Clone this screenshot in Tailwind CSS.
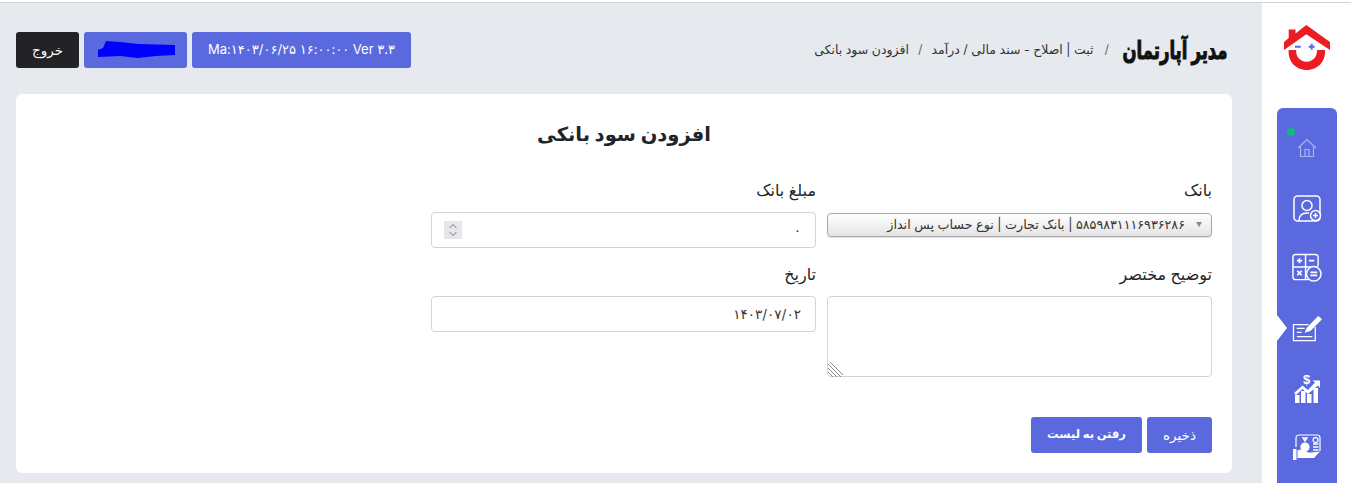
<!DOCTYPE html>
<html lang="fa">
<head>
  <meta charset="UTF-8">
  <meta name="viewport" content="width=device-width, initial-scale=1.0">
  <title>افزودن سود بانکی</title>
  <script src="https://cdn.jsdelivr.net/npm/@tailwindcss/browser@4"></script>
</head>
<body class="h-[483px] overflow-hidden bg-white font-['Inter','DejaVu_Sans',sans-serif] text-[#212529]">
  <div class="mt-[2px] flex h-[481px] border-t border-[#d4d4d4]">

    <!-- main -->
    <main class="w-[1262px] bg-[#e6e9ed] pt-[29px] pr-[30px] pl-4">
      <header class="flex h-9 items-center justify-between" dir="ltr">
        <div class="flex gap-[5px] text-[13.5px]">
          <button class="h-9 w-[63px] rounded-[3px] bg-[#232327] text-white" dir="rtl">خروج</button>
          <div class="flex h-9 w-[103px] items-center justify-center rounded-[3px] bg-[#5a69de]">
            <svg class="ml-[2px]" width="78" height="18" viewBox="0 0 78 18"><path d="M5 7 L8 0 L22 1 L40 3 L77 4 L77 14 L58 15 L40 17 L22 15 L0 16 L0 9 Z" fill="#0000ff"/></svg>
          </div>
          <div class="flex h-9 w-[219px] items-center justify-center rounded-[3px] bg-[#5a69de] text-[13px] text-white" dir="ltr">Ma:۱۴۰۳/۰۶/۲۵ ۱۶:۰۰:۰۰ Ver ۳.۳</div>
        </div>
        <div class="flex items-center" dir="rtl">
          <div class="mr-[4px] ml-[13px] w-[106px] scale-y-[1.5] text-center text-[16.5px] leading-none font-bold whitespace-nowrap text-[#111] [-webkit-text-stroke:0.7px_#111]">مدیر آپارتمان</div>
          <nav class="flex items-center gap-[9px] text-[12.5px] text-[#333]">
            <span class="ml-[2px] text-[#666]">/</span>
            <span>ثبت | اصلاح - سند مالی / درآمد</span>
            <span class="text-[#666]">/</span>
            <span>افزودن سود بانکی</span>
          </nav>
        </div>
      </header>

      <section class="mt-[26px] h-[379px] rounded-md bg-white px-5 pt-[26px]" dir="rtl">
        <h1 class="text-center text-[19.5px] leading-[28px] font-bold text-[#212529]">افزودن سود بانکی</h1>

        <form class="mt-[30px]">
          <div class="grid grid-cols-[385px_385px] gap-x-[11px]">
            <div>
              <label class="block h-[34px] text-[16px] leading-[24px]">بانک</label>
              <div class="relative h-9 pt-px">
                <select class="block h-6 w-full appearance-none rounded-[4px] border border-[#a8a8a8] bg-gradient-to-b from-white to-[#e4e4e4] pr-[26px] pl-2 text-[12.7px] text-[#333] shadow-[0_1px_1px_rgba(0,0,0,0.12)]">
                  <option>۵۸۵۹۸۳۱۱۱۶۹۳۶۲۸۶ | بانک تجارت | نوع حساب پس انداز</option>
                </select>
                <span class="absolute top-[10px] right-[10px] h-0 w-0 border-x-[3.5px] border-t-[5px] border-x-transparent border-t-[#888]"></span>
              </div>
            </div>
            <div>
              <label class="block h-[34px] text-[16px] leading-[24px]">مبلغ بانک</label>
              <div class="relative">
                <input type="text" value="۰" class="h-9 w-full rounded-[4px] border border-[#cfd4da] bg-white px-[14px] text-[13.5px] text-[#333]">
                <span class="absolute top-[9px] left-[13px] flex h-[18px] w-[18px] flex-col items-center justify-center bg-[#e6e6eb]">
                  <svg width="10" height="14" viewBox="0 0 10 14" fill="none" stroke="#777" stroke-width="1"><path d="M1.5 5 5 1.5 8.5 5M1.5 9 5 12.5 8.5 9"/></svg>
                </span>
              </div>
            </div>
          </div>

          <div class="mt-[14px] grid grid-cols-[385px_385px] gap-x-[11px]">
            <div>
              <label class="block h-[34px] text-[16px] leading-[24px]">توضیح مختصر</label>
              <div class="relative">
                <textarea class="block h-[81px] w-full resize-none rounded-[4px] border border-[#cfd4da] bg-white"></textarea>
                <svg class="absolute bottom-0 left-0" width="16" height="16" viewBox="0 0 16 16" fill="none" stroke="#8a8a8a" stroke-width="1"><path d="M1 3 14 16M1 7 10 16M1 11 6 16M3 1 16 14"/></svg>
              </div>
            </div>
            <div>
              <label class="block h-[34px] text-[16px] leading-[24px]">تاریخ</label>
              <input type="text" value="۱۴۰۳/۰۷/۰۲" class="h-9 w-full rounded-[4px] border border-[#cfd4da] bg-white px-[14px] text-[13.5px] text-[#333]">
            </div>
          </div>

          <div class="mt-10 flex gap-[5px]">
            <button type="button" class="h-9 w-[65px] rounded-[3px] bg-[#5a69de] text-[13.5px] text-white">ذخیره</button>
            <button type="button" class="h-9 w-[111px] rounded-[3px] bg-[#5a69de] text-[11.5px] font-bold text-white">رفتن به لیست</button>
          </div>
        </form>
      </section>
    </main>

    <!-- sidebar -->
    <aside class="w-[89px] bg-white">
      <div class="flex h-[105px] items-start justify-center pt-[21px]">
        <svg class="ml-[1px]" width="46" height="48" viewBox="0 0 46 48">
          <path d="M0 18V26L22.300 10.300 46 26V18L22.300 1 11.500 9.500V5.500H4.700V14Z" fill="#ed1c24"/>
          <path d="M4.700 26H12.300C11.500 31 15 37.700 22.500 37.700 30 37.700 33.500 31 33 26H41C42 37 34 46 22.800 46 11.500 46 3.700 37 4.700 26Z" fill="#ed1c24"/>
          <path d="M11 22.700H16.700M24.700 22.700H30.700M27.700 19.700V25.700" stroke="#5a69de" stroke-width="2" fill="none"/>
        </svg>
      </div>
      <div class="relative ml-[15px] flex h-[375px] w-[60px] flex-col items-center gap-[31px] rounded-t-md bg-[#5a69de] pt-[30px] text-white">
        <span class="absolute top-[20px] left-[10px] h-2 w-2 rounded-full bg-[#10b981]"></span>
        <span class="absolute top-[207px] left-0 h-0 w-0 border-y-[13px] border-l-[10px] border-y-transparent border-l-white"></span>

        <svg class="mb-[6px]" width="20" height="20" viewBox="0 0 20 20" fill="none" stroke="#aab3f0" stroke-width="1.200"><path d="M1 10 10 1.500 19 10M3.500 8.500V18.500H16.500V8.500M8 18.500V11.500H12V18.500"/></svg>
        <svg width="29" height="27" viewBox="0 0 29 27" fill="none" stroke="#fff" stroke-width="1.500"><rect x="1" y="1" width="26" height="25" rx="3.500"/><circle cx="14" cy="10.500" r="5"/><path d="M6 26c0-5 3-8 8-8h2"/><circle cx="22.500" cy="20.500" r="5" fill="#5a69de"/><path d="M20 20.500h5M22.500 18v5"/></svg>
        <svg width="30" height="30" viewBox="0 0 31 30" fill="none" stroke="#fff" stroke-width="1.500"><path d="M17 27H3.500A2.500 2.500 0 0 1 1 24.500V3.500A2.500 2.500 0 0 1 3.500 1h21A2.500 2.500 0 0 1 27 3.500V13M14 1v26M1 14h26"/><path d="M5 7.500h5.500M7.750 5v5M17.500 7.500h5.500M5.500 18l4.500 4.500M10 18l-4.500 4.500" stroke-width="1.800"/><circle cx="22.500" cy="21" r="7.500" fill="#5a69de"/><path d="M19 19.500h7M19 22.500h7" stroke-width="1.800"/></svg>
        <svg width="31" height="28" viewBox="0 0 32 28" fill="none" stroke="#fff" stroke-width="1.300"><path d="M24 13V27H1.500V10.500H17"/><path d="M5 14.500h8M5 18.500h5M5 23h16"/><path d="M13 19l2-5L27 1.500l4 3.500L19 17z" fill="#fff" stroke="none"/></svg>
        <svg class="overflow-visible" width="26" height="30" viewBox="0 0 26 30" fill="#fff"><rect x="1" y="22" width="4.500" height="8"/><rect x="7" y="18" width="4.500" height="12"/><rect x="13" y="21" width="4.500" height="9"/><rect x="19.500" y="15" width="4.500" height="15"/><path d="M0 20 8.500 12.500 14 17 21 9.500 18.500 7.500H26V15L24 12.500 14 21 8.500 16 2 22Z"/><text x="9" y="11" font-size="13" font-weight="700" font-family="Liberation Sans">$</text></svg>
        <svg width="28" height="27" viewBox="0 0 28 27" fill="none" stroke="#fff" stroke-width="1.200"><path d="M3 13V4a3 3 0 0 1 3-3h18a3 3 0 0 1 3 3v13"/><circle cx="12" cy="13" r="4" fill="#fff"/><path d="M10 4h4l-2 3zM22.500 3.500a2.500 2.500 0 1 0 .1 0M20 10h5.500M20 13h5.500M20 16h5.500" stroke-width="1.400"/><path d="M0 15h3.500v11H0zM4.500 16.500c3-1.500 6-1 8 .5l3 1.500h3l8.500-1-6 6.500H4.500z" fill="#fff" stroke="none"/></svg>
      </div>
    </aside>
  </div>
</body>
</html>
